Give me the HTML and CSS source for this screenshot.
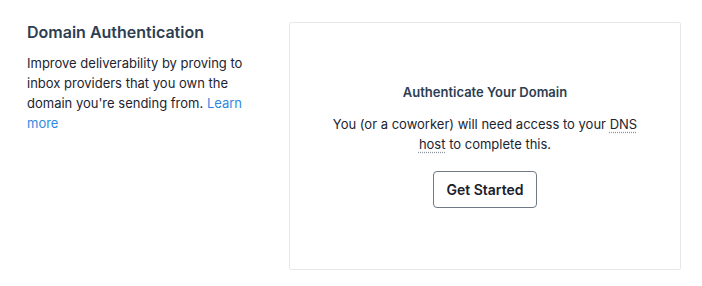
FILE: index.html
```html
<!DOCTYPE html>
<html lang="en">
<head>
<meta charset="utf-8">
<link rel="stylesheet" href="styles.css">
</head>
<body>
<div class="page">
  <section class="intro">
    <h2 class="intro-title">Domain Authentication</h2>
    <p class="intro-text">Improve deliverability by proving to inbox providers that you own the domain you're sending from. <a class="link" href="#">Learn more</a></p>
  </section>
  <section class="card">
    <h3 class="card-title">Authenticate Your Domain</h3>
    <p class="card-text">You (or a coworker) will need access to your <span class="term">DNS host</span> to complete this.</p>
    <button class="btn" type="button">Get Started</button>
  </section>
</div>
</body>
</html>
```
FILE: styles.css
```css
* { box-sizing: border-box; }
html, body { margin: 0; background: #ffffff; }
body {
  font-family: Inter, "Noto Sans", sans-serif;
  color: #1f2733;
  -webkit-font-smoothing: antialiased;
}
.page {
  display: flex;
  align-items: flex-start;
  gap: 34px;
  padding: 22px 21px 0 27px;
}
.intro { width: 228px; flex: none; }
.intro-title {
  margin: 0;
  font-size: 16px;
  line-height: 20px;
  font-weight: 600;
  color: #2d3e52;
}
.intro-text {
  margin: 11px 0 0;
  font-size: 13px;
  line-height: 20px;
  color: #1c2430;
}
.link { color: #2f89e0; text-decoration: none; }
.card {
  flex: 1;
  height: 248px;
  border: 1px solid #e6e8ea;
  border-radius: 2px;
  display: flex;
  flex-direction: column;
  align-items: center;
  justify-content: center;
  text-align: center;
  padding: 0 30px;
}
.card-title {
  margin: 0;
  font-size: 13px;
  line-height: 14px;
  font-weight: 600;
  color: #2d3e52;
}
.card-text {
  margin: 15px 0 0;
  font-size: 13px;
  line-height: 20px;
  color: #1c2430;
  max-width: 312px;
}
.term {
  text-decoration: underline dotted #8a94a0;
  text-underline-offset: 3px;
}
.btn {
  margin-top: 17px;
  width: 104px;
  height: 37px;
  font-family: inherit;
  font-size: 14px;
  font-weight: 600;
  color: #1a202b;
  background: #ffffff;
  border: 1px solid #6f7a87;
  border-radius: 4px;
  cursor: pointer;
}
```
